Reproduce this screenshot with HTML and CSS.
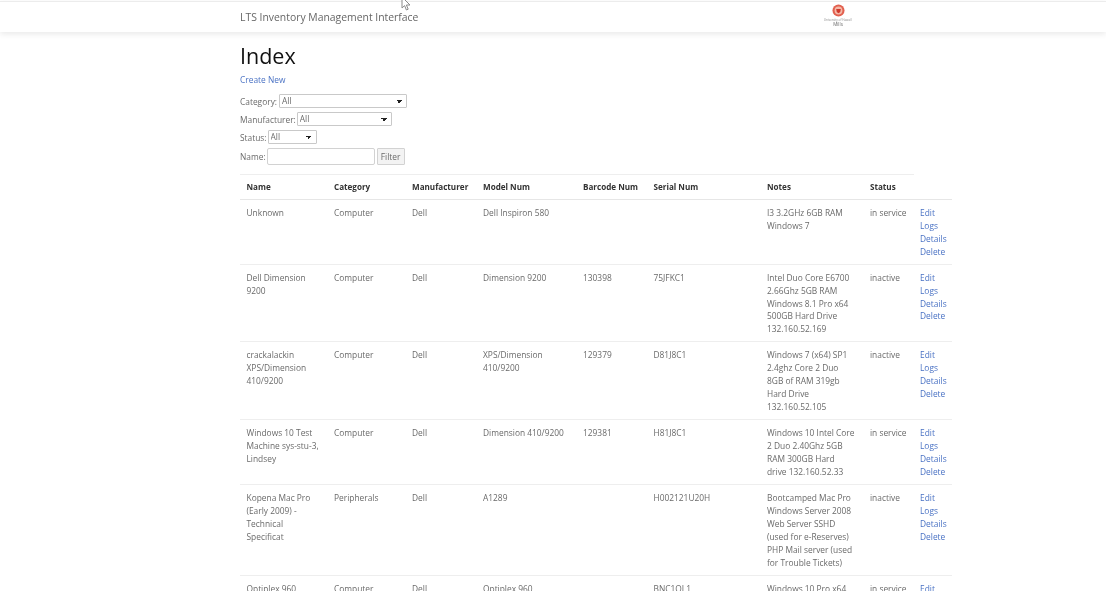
FILE: index.html
```html
<!DOCTYPE html>
<html lang="en">
<head>
<meta charset="utf-8">
<title>Index</title>
<link rel="stylesheet" href="styles.css">
</head>
<body>
<header class="navbar">
  <a class="brand">LTS Inventory Management Interface</a>
  <div class="logo">
    <svg class="logo-mark" viewBox="0 0 14 14" width="13" height="13"><circle cx="7" cy="7" r="6.5" fill="#e2604f"/><circle cx="7" cy="7" r="4.2" fill="#f4b9a8"/><path d="M4.5 5.5h5l-.6 3L7 10 5.1 8.5z" fill="#d0392c"/></svg>
    <span class="logo-small">University of Hawaiʻi</span>
    <span class="logo-name">Mills</span>
  </div>
</header>
<main class="content">
  <h1 class="title">Index</h1>
  <p class="create"><a class="link">Create New</a></p>
  <form class="filters">
    <div class="field field-cat"><label>Category:</label> <select class="sel sel-cat"><option>All</option></select></div>
    <div class="field"><label>Manufacturer:</label> <select class="sel sel-man"><option>All</option></select></div>
    <div class="field"><label>Status:</label> <select class="sel sel-sta"><option>All</option></select></div>
    <div class="field field-name"><label>Name:</label> <input class="name-input" type="text"> <button class="btn" type="button">Filter</button></div>
  </form>
  <table class="grid">
    <colgroup>
      <col class="c1"><col class="c2"><col class="c3"><col class="c4"><col class="c5"><col class="c6"><col class="c7"><col class="c8"><col class="c9">
    </colgroup>
    <thead>
      <tr><th>Name</th><th>Category</th><th>Manufacturer</th><th>Model Num</th><th>Barcode Num</th><th>Serial Num</th><th>Notes</th><th>Status</th><th class="blank"></th></tr>
    </thead>
    <tbody>
      <tr><td>Unknown</td><td>Computer</td><td>Dell</td><td>Dell Inspiron 580</td><td></td><td></td><td>I3 3.2GHz 6GB RAM Windows 7</td><td>in service</td><td><a class="link">Edit</a><a class="link">Logs</a><a class="link">Details</a><a class="link">Delete</a></td></tr>
      <tr><td>Dell Dimension 9200</td><td>Computer</td><td>Dell</td><td>Dimension 9200</td><td>130398</td><td>75JFKC1</td><td>Intel Duo Core E6700 2.66Ghz 5GB RAM Windows 8.1 Pro x64 500GB Hard Drive 132.160.52.169</td><td>inactive</td><td><a class="link">Edit</a><a class="link">Logs</a><a class="link">Details</a><a class="link">Delete</a></td></tr>
      <tr><td>crackalackin XPS/Dimension 410/9200</td><td>Computer</td><td>Dell</td><td>XPS/Dimension 410/9200</td><td>129379</td><td>D81J8C1</td><td>Windows 7 (x64) SP1 2.4ghz Core 2 Duo 8GB of RAM 319gb Hard Drive 132.160.52.105</td><td>inactive</td><td><a class="link">Edit</a><a class="link">Logs</a><a class="link">Details</a><a class="link">Delete</a></td></tr>
      <tr><td>Windows 10 Test Machine sys-stu-3, Lindsey</td><td>Computer</td><td>Dell</td><td>Dimension 410/9200</td><td>129381</td><td>H81J8C1</td><td>Windows 10 Intel Core 2 Duo 2.40Ghz 5GB RAM 300GB Hard drive 132.160.52.33</td><td>in service</td><td><a class="link">Edit</a><a class="link">Logs</a><a class="link">Details</a><a class="link">Delete</a></td></tr>
      <tr><td>Kopena Mac Pro (Early 2009) - Technical Specificat</td><td>Peripherals</td><td>Dell</td><td>A1289</td><td></td><td>H002121U20H</td><td>Bootcamped Mac Pro Windows Server 2008 Web Server SSHD (used for e-Reserves) PHP Mail server (used for Trouble Tickets)</td><td>inactive</td><td><a class="link">Edit</a><a class="link">Logs</a><a class="link">Details</a><a class="link">Delete</a></td></tr>
      <tr><td>Optiplex 960</td><td>Computer</td><td>Dell</td><td>Optiplex 960</td><td></td><td>BNC1QL1</td><td>Windows 10 Pro x64</td><td>in service</td><td><a class="link">Edit</a></td></tr>
    </tbody>
  </table>
</main>
<svg class="cursor" viewBox="0 0 10 14" width="10" height="14"><path d="M1 0v11l2.6-2.4L5.4 13l1.8-.8-1.8-4.2H9z" fill="#fff" stroke="#8a8a8a" stroke-width="1"/></svg>
</body>
</html>
```
FILE: styles.css
```css
html, body {
  margin: 0;
  height: 591px;
  overflow: hidden;
  background: #fff;
}
body {
  font-family: "Open Sans", "Noto Sans", sans-serif;
  font-size: 8.4px;
  line-height: 13px;
  color: #6a6a6a;
  position: relative;
  filter: blur(0.35px);
}
.navbar {
  display: flex;
  align-items: center;
  height: 30px;
  margin-top: 1px;
  padding: 0 251px 0 240px;
  border-top: 1px solid #ececec;
  box-shadow: 0 2px 6px rgba(0, 0, 0, 0.09);
}
.brand {
  font-size: 10.4px;
  color: #666;
}
.logo {
  margin-left: auto;
  width: 34px;
  display: flex;
  flex-direction: column;
  align-items: center;
  line-height: 1;
}
.logo-mark {
  display: block;
  margin-top: -3px;
  margin-bottom: 1px;
}
.logo-small {
  font-size: 3px;
  line-height: 4px;
  white-space: nowrap;
  color: #888;
}
.logo-name {
  font-size: 4.5px;
  line-height: 5px;
  color: #666;
}
.content {
  padding: 10px 0 0 240px;
  width: 712px;
}
.title {
  margin: 0;
  font-size: 21.5px;
  line-height: 28px;
  font-weight: 400;
  color: #111;
}
.create {
  margin: 3px 0 8px;
}
.link {
  display: block;
  color: #4a72c4;
}
.filters {
  margin-bottom: 9px;
}
.field {
  display: flex;
  align-items: center;
  gap: 1px;
  height: 14px;
  margin-bottom: 4px;
}
.field-cat {
  gap: 2px;
}
.field-name {
  height: 17px;
  margin-bottom: 0;
}
.sel {
  appearance: none;
  height: 14px;
  padding: 0 0 0 2px;
  font: inherit;
  line-height: 12px;
  color: #6a6a6a;
  background-color: #fff;
  background-image:
    linear-gradient(45deg, transparent 50%, #222 50%),
    linear-gradient(-45deg, transparent 50%, #222 50%);
  background-size: 3px 3px;
  background-position: calc(100% - 7px) 5px, calc(100% - 4px) 5px;
  background-repeat: no-repeat;
  border: 1px solid #c9c9c9;
  border-radius: 1px;
  box-sizing: border-box;
}
.sel-cat { width: 128px; }
.sel-man { width: 95px; }
.sel-sta { width: 49px; }
.name-input {
  width: 108px;
  height: 17px;
  padding: 0;
  box-sizing: border-box;
  border: 1px solid #d2d2d2;
  border-radius: 2px;
}
.btn {
  width: 28px;
  height: 17px;
  margin-left: 1px;
  padding: 0;
  font: inherit;
  color: #6a6a6a;
  background: #f3f3f3;
  border: 1px solid #d2d2d2;
  border-radius: 1px;
}
.grid {
  table-layout: fixed;
  width: 712px;
  border-collapse: collapse;
  line-height: 12.9px;
}
.c1 { width: 87.5px; }
.c2 { width: 78px; }
.c3 { width: 71px; }
.c4 { width: 100px; }
.c5 { width: 70.5px; }
.c6 { width: 113.5px; }
.c7 { width: 103px; }
.c8 { width: 50px; }
.c9 { width: 38.5px; }
.grid th,
.grid td {
  padding: 7px 6.5px 5.2px;
  text-align: left;
  vertical-align: top;
  border-top: 1px solid #eeeeee;
}
.grid th {
  padding: 6px 6.5px 5px;
  font-size: 8.1px;
  font-weight: 700;
  color: #333;
  white-space: nowrap;
  border-bottom: 1px solid #e6e6e6;
}
.grid th.blank {
  border-top: 0;
}
.grid td:nth-child(7) {
  padding-right: 8px;
}
.grid td:nth-child(8) {
  white-space: nowrap;
}
.grid td:last-child {
  padding-right: 0;
}
.cursor {
  position: absolute;
  left: 401px;
  top: -3px;
}
```
